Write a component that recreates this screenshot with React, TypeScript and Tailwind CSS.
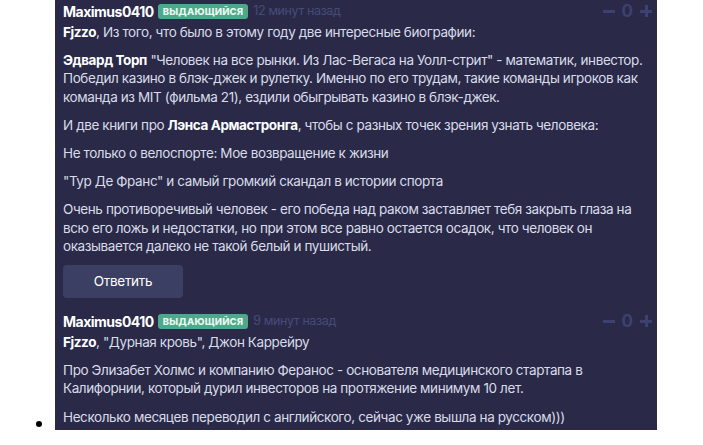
import React from 'react';

interface CommentProps {
  author: string;
  time: string;
  children: React.ReactNode;
  reply?: boolean;
}

function Votes() {
  return (
    <div className="flex items-center gap-[7px] text-[17px] font-bold leading-none text-[#3c4170] select-none">
      <span className="inline-block h-[3px] w-[12px] bg-[#3c4170]"></span>
      <span>0</span>
      <span className="relative inline-block h-[12px] w-[12px]">
        <span className="absolute left-0 top-[4.5px] h-[3px] w-[12px] bg-[#3c4170]"></span>
        <span className="absolute left-[4.5px] top-0 h-[12px] w-[3px] bg-[#3c4170]"></span>
      </span>
    </div>
  );
}

function Comment({ author, time, children, reply }: CommentProps) {
  return (
    <div className="pb-[12px]">
      <div className="flex items-center h-[22px] mb-[1px]">
        <span className="text-[14px] font-bold tracking-[-0.5px] text-white">{author}</span>
        <span className="ml-[4px] rounded-[3px] bg-[#4ca98a] px-[5px] py-[1px] text-[9.5px] font-extrabold uppercase tracking-[0.02em] text-[#e9f7f1] leading-[13px]">
          выдающийся
        </span>
        <span className="ml-[5px] text-[12.5px] tracking-[-0.4px] text-[#464b78]">{time}</span>
        <div className="ml-auto pr-[1px]">
          <Votes />
        </div>
      </div>
      <div className="text-[13.5px] leading-[18.2px] tracking-[-0.4px] text-[#d9dbe9] [&>p]:mb-[10px] [&>p:last-child]:mb-0">
        {children}
      </div>
      {reply && (
        <button className="mt-[10px] h-[33px] w-[120px] rounded-[4px] bg-[#3b3f63] text-[13.5px] tracking-[-0.3px] text-white">
          Ответить
        </button>
      )}
    </div>
  );
}

export default function App() {
  return (
    <div className="h-[445px] w-[703px] overflow-hidden bg-white font-['Inter',sans-serif]">
      <div className="flex">
        <div className="w-[55px] flex-none relative">
          <span className="absolute left-[36px] top-[421px] h-[6px] w-[6px] rounded-full bg-black"></span>
        </div>
        <div className="w-[602px] h-[430px] overflow-hidden bg-[#2a2a48] pl-[8px] pr-[4px] pt-0">
          <Comment author="Maximus0410" time="12 минут назад" reply>
            <p>
              <b className="text-white">Fjzzo</b>, Из того, что было в этому году две интересные биографии:
            </p>
            <p>
              <b className="text-white">Эдвард Торп</b> "Человек на все рынки. Из Лас-Вегаса на Уолл-стрит" - математик, инвестор. Победил казино в блэк-джек и рулетку. Именно по его трудам, такие команды игроков как команда из MIT (фильма 21), ездили обыгрывать казино в блэк-джек.
            </p>
            <p>
              И две книги про <b className="text-white">Лэнса Армастронга</b>, чтобы с разных точек зрения узнать человека:
            </p>
            <p>Не только о велоспорте: Мое возвращение к жизни</p>
            <p>"Тур Де Франс" и самый громкий скандал в истории спорта</p>
            <p>
              Очень противоречивый человек - его победа над раком заставляет тебя закрыть глаза на всю его ложь и недостатки, но при этом все равно остается осадок, что человек он оказывается далеко не такой белый и пушистый.
            </p>
          </Comment>
          <Comment author="Maximus0410" time="9 минут назад">
            <p>
              <b className="text-white">Fjzzo</b>, "Дурная кровь", Джон Каррейру
            </p>
            <p>
              Про Элизабет Холмс и компанию Феранос - основателя медицинского стартапа в Калифорнии, который дурил инвесторов на протяжение минимум 10 лет.
            </p>
            <p>Несколько месяцев переводил с английского, сейчас уже вышла на русском)))</p>
          </Comment>
        </div>
      </div>
    </div>
  );
}
